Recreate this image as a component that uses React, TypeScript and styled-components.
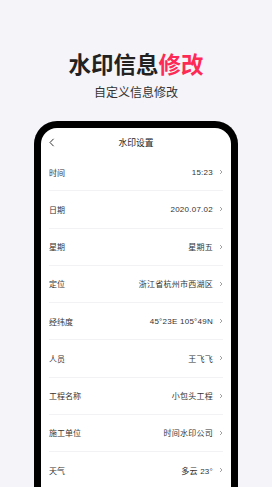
import React from 'react';
import styled, { createGlobalStyle } from 'styled-components';

interface RowData {
  label: string;
  value: string;
}

const GlobalStyle = createGlobalStyle`
  html, body {
    margin: 0;
    padding: 0;
    background: #f5f4f9;
    overflow: hidden;
  }
  body {
    font-family: 'Liberation Sans', 'Noto Sans CJK SC', sans-serif;
  }
`;

const Page = styled.main`
  width: 272px;
  height: 487px;
  overflow: hidden;
  display: flex;
  flex-direction: column;
  align-items: center;
  padding-top: 52px;
  box-sizing: border-box;
`;

const Title = styled.h1`
  margin: 0;
  font-size: 22.5px;
  line-height: 28px;
  font-weight: 700;
  color: #222222;
`;

const Accent = styled.span`
  color: #fe2a55;
`;

const SubTitle = styled.p`
  margin: 5px 0 0;
  font-size: 12px;
  line-height: 16px;
  color: #333333;
`;

const Phone = styled.section`
  margin-top: 20px;
  width: 204px;
  flex: 1;
  box-sizing: border-box;
  border: 7px solid #000000;
  border-bottom: none;
  border-radius: 23px 23px 0 0;
  background: #ffffff;
  display: flex;
  flex-direction: column;
  padding: 0 8px;
`;

const Header = styled.div`
  height: 26px;
  padding-top: 9px;
  box-sizing: border-box;
  display: flex;
  justify-content: center;
  position: relative;
  font-size: 8.8px;
  line-height: 12px;
  color: #222222;
`;

const Back = styled.svg`
  position: absolute;
  left: 0;
  top: 10px;
`;

const Row = styled.div`
  height: 37.25px;
  box-sizing: border-box;
  border-bottom: 1px solid #f2f2f4;
  display: flex;
  align-items: center;
  font-size: 8px;
  color: #333333;
  flex-shrink: 0;
`;

const Label = styled.span`
  flex: 1;
`;

const Value = styled.span`
  margin-right: 6px;
  letter-spacing: 0.25px;
`;

const Chevron = () => (
  <svg width="4" height="6" viewBox="0 0 4 6">
    <path d="M1 1 L3 3 L1 5" fill="none" stroke="#8a8a8a" strokeWidth="0.8" />
  </svg>
);

const rows: RowData[] = [
  { label: '时间', value: '15:23' },
  { label: '日期', value: '2020.07.02' },
  { label: '星期', value: '星期五' },
  { label: '定位', value: '浙江省杭州市西湖区' },
  { label: '经纬度', value: '45°23E 105°49N' },
  { label: '人员', value: '王飞飞' },
  { label: '工程名称', value: '小包头工程' },
  { label: '施工单位', value: '时间水印公司' },
  { label: '天气', value: '多云 23°' },
];

const App = () => (
  <>
    <GlobalStyle />
    <Page>
      <Title>
        水印信息<Accent>修改</Accent>
      </Title>
      <SubTitle>自定义信息修改</SubTitle>
      <Phone>
        <Header>
          <Back width="6" height="9" viewBox="0 0 6 9">
            <path d="M4.6 0.8 L1 4.5 L4.6 8.2" fill="none" stroke="#333" strokeWidth="1" />
          </Back>
          水印设置
        </Header>
        {rows.map((r) => (
          <Row key={r.label}>
            <Label>{r.label}</Label>
            <Value>{r.value}</Value>
            <Chevron />
          </Row>
        ))}
      </Phone>
    </Page>
  </>
);

export default App;
